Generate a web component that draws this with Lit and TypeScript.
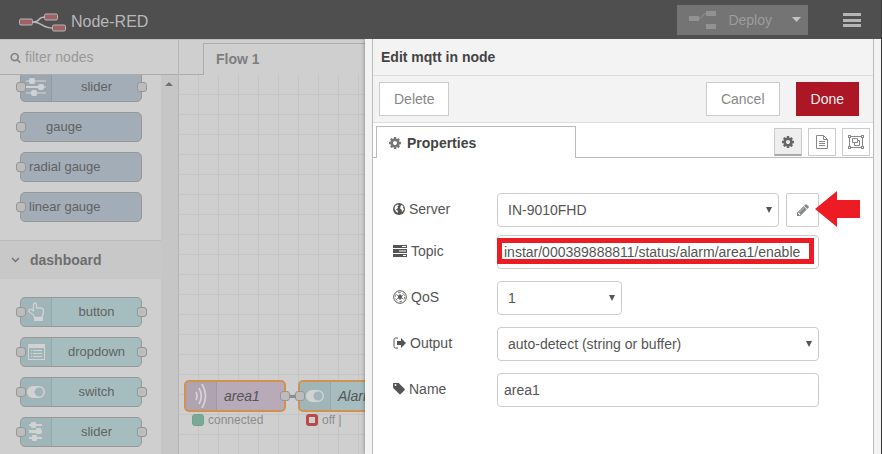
import { LitElement, html, svg, css, nothing, type TemplateResult } from "lit";
import { customElement, property } from "lit/decorators.js";

const COG =
  "M1152 896q0-106-75-181t-181-75-181 75-75 181 75 181 181 75 181-75 75-181zm512-109v222q0 12-8 23t-20 13l-185 28q-19 54-39 91 35 50 107 138 10 12 10 25t-9 23q-27 37-99 108t-94 71q-12 0-26-9l-138-108q-44 23-91 38-16 136-29 186-7 28-36 28h-222q-14 0-24.5-8.5t-11.5-21.5l-28-184q-49-16-90-37l-141 107q-10 9-25 9-14 0-25-11-126-114-165-168-7-10-7-23 0-12 8-23 15-21 51-66.5t54-70.5q-27-50-41-99l-183-27q-13-2-21-12.5t-8-23.5v-222q0-12 8-23t19-13l186-28q14-46 39-92-40-57-107-138-10-12-10-24 0-10 9-23 26-36 98.5-107.5t94.5-71.5q13 0 26 10l138 107q44-23 91-38 16-136 29-186 7-28 36-28h222q14 0 24.5 8.5t11.5 21.5l28 184q49 16 90 37l142-107q9-9 24-9 13 0 25 10 129 119 165 170 7 8 7 22 0 12-8 23-15 21-51 66.5t-54 70.5q26 50 41 98l183 28q13 2 21 12.5t8 23.5z";
const SEARCH =
  "M1216 832q0-185-131.5-316.5t-316.5-131.5-316.5 131.5-131.5 316.5 131.5 316.5 316.5 131.5 316.5-131.5 131.5-316.5zm512 832q0 52-38 90t-90 38q-54 0-90-38l-343-342q-179 124-399 124-143 0-273.5-55.5t-225-150-150-225-55.5-273.5 55.5-273.5 150-225 225-150 273.5-55.5 273.5 55.5 225 150 150 225 55.5 273.5q0 220-124 399l343 343q37 37 37 90z";
const PENCIL =
  "M491 1536l91-91-235-235-91 91v107h128v128h107zm523-928q0-22-22-22-10 0-17 7l-542 542q-7 7-7 17 0 22 22 22 10 0 17-7l542-542q7-7 7-17zm-54-192l416 416-832 832h-416v-416zm683 96q0 53-37 90l-166 166-416-416 166-165q36-38 90-38 53 0 91 38l235 234q37 39 37 91z";
const TAG =
  "M576 448q0-53-37.5-90.5t-90.5-37.5-90.5 37.5-37.5 90.5 37.5 90.5 90.5 37.5 90.5-37.5 37.5-90.5zm1067 576q0 53-37 90l-491 492q-39 37-91 37-53 0-90-37l-715-716q-38-37-64.5-101t-26.5-117v-416q0-52 38-90t90-38h416q53 0 117 26.5t102 64.5l715 714q37 39 37 91z";

const icon = (w: number, h: number, body: TemplateResult, box = `0 0 ${w} ${h}`) =>
  html`<svg width=${w} height=${h} viewBox=${box} fill="currentColor" aria-hidden="true">${body}</svg>`;
const glyph = (size: number, d: string, box = "0 0 1792 1792") =>
  icon(size, size, svg`<path d=${d} />`, box);

const icons: Record<string, TemplateResult> = {
  sliders: icon(20, 20, svg`
    <path d="M0 3h20v2H0zM0 9h20v2H0zM0 15h20v2H0z" opacity=".55" />
    <path d="M0 9h12v2H0z" />
    <rect x="3" y="1" width="6" height="6" rx="2" /><rect x="12" y="7" width="6" height="6" rx="2" />
    <rect x="5" y="13" width="6" height="6" rx="2" />`),
  hslider: icon(16, 20, svg`
    <path d="M1 2h13v2H1zM1 8h13v3H1zM1 15h13v2H1z" />
    <rect x="3" y="0" width="5" height="6" rx="1" /><rect x="8" y="6" width="5" height="6" rx="1" />
    <rect x="4" y="13" width="5" height="6" rx="1" />`),
  hand: icon(17, 20, svg`
    <path d="M5.500 9V2.500q0-1.500 1.500-1.500t1.500 1.500V6h4.500q2.500 0 2.500 3 0 4-2 6.500H7Q5.500 12 2 10.500 0 9 1.500 7.500 3 6.500 5.500 9z"
      fill="none" stroke="currentColor" stroke-width="1.300" stroke-linejoin="round" />
    <path d="M6 15h9v4H6z" />`),
  list: icon(17, 18, svg`
    <path fill-rule="evenodd" d="M0 1h17v16H0zM1 5v11h15V5z" />
    <path d="M3 7h1v1H3zM5 7h9v1H5zM3 10h1v1H3zM5 10h9v1H5zM3 13h1v1H3zM5 13h9v1H5z" />`),
  toggle: icon(18, 14, svg`
    <path fill-rule="evenodd" d="M6 1h6a6 6 0 0 1 0 12H6A6 6 0 0 1 6 1zm6 1.500a4.500 4.500 0 1 0 0 9 4.500 4.500 0 0 0 0-9z" />`),
  waves: icon(12, 24, svg`
    <g fill="none" stroke="currentColor" stroke-width="1.800">
      <path d="M1 8q2 4 0 8M4 4q4.500 8 0 16M7 0q7 12 0 24" /></g>`),
  globe: icon(12, 12, svg`
    <circle cx="6" cy="6" r="6" />
    <path fill="#fff" d="M2 3l2.500-1.500L6 2 4.500 3.500 5 5 3 6.500 5 8l-.5 2L3 8.500 1.500 6zM8 2l2.500 1-.5 1.500 1 2-2 2.500-.5-2.500L7 5.500z" />`),
  tasks: icon(14, 12, svg`
    <path fill-rule="evenodd" d="M0 0h14v3H0zM9 1v1h4V1zM0 4h14v4H0zM6 5.500v1h7v-1zM0 9h14v3H0zM10 10v1h3v-1z" />`),
  empire: icon(14, 14, svg`
    <circle cx="7" cy="7" r="6.300" fill="none" stroke="currentColor" />
    <circle cx="7" cy="7" r="4.600" fill="none" stroke="currentColor" stroke-width=".8" stroke-dasharray="2.800 2" />
    <path stroke="currentColor" d="M7 4v6M4.300 5.500l5.400 3M4.300 8.500l5.400-3" /><circle cx="7" cy="7" r="2" />`),
  signout: icon(13, 12, svg`
    <path d="M5 1H2.500Q1 1 1 2.500v7Q1 11 2.500 11H5" fill="none" stroke="currentColor" />
    <path d="M4 4h4V1l5 5-5 5V8H4z" />`),
  tag: glyph(12, TAG, "128 192 1536 1536"),
  cog: glyph(14, COG),
  search: glyph(11, SEARCH),
  pencil: glyph(14, PENCIL),
  doc: icon(12, 14, svg`
    <path d="M.5.5h7l4 4v9H.5zM7.500.5v4h4M3 6.500h6M3 8.500h6M3 10.500h6" fill="none" stroke="currentColor" />`),
  group: icon(16, 14, svg`
    <path d="M1.500 1.500h13v11h-13zM4.500 3.500h5v4h-5zM9.500 5.500h2v5h-5v-3" fill="none" stroke="currentColor" />
    <path d="M0 0h3v3H0zM13 0h3v3h-3zM0 11h3v3H0zM13 11h3v3h-3z" />
    <path fill="#fff" d="M1 1h1v1H1zM14 1h1v1h-1zM1 12h1v1H1zM14 12h1v1h-1z" />`),
  chevron: icon(9, 6, svg`<path d="M1 1l3.500 3.500L8 1" fill="none" stroke="currentColor" stroke-width="1.300" />`),
  down: icon(6, 6, svg`<path d="M0 0h6L3 6z" />`),
  caret: icon(9, 5, svg`<path d="M0 0h9L4.500 5z" />`),
  up: icon(8, 4, svg`<path d="M0 4h8L4 0z" />`),
  bars: icon(18, 14, svg`<path d="M0 0h18v3H0zM0 6h18v3H0zM0 11h18v3H0z" />`),
  deploy: icon(28, 18, svg`
    <path d="M0 5h10v5H0zM17 0h10v5H17zM17 13h10v5H17z" />
    <path d="M10 7.500q2 0 3.500-2.500T17 2.500" fill="none" stroke="currentColor" />`),
};

/** A flow node: body, optional icon strip and its ports. */
@customElement("flow-node")
export class FlowNode extends LitElement {
  @property() label = "";
  @property() icon = "";
  @property() ports = "both";

  static styles = css`
    :host {
      display: flex;
      position: relative;
      box-sizing: border-box;
      height: 30px;
      border: 1px solid #989898;
      border-radius: 5px;
      background: var(--node, #a2adb7);
      color: #626262;
      font-size: 13px;
    }
    .strip {
      display: flex;
      align-items: center;
      justify-content: center;
      flex: 0 0 30px;
      border-right: 1px solid rgba(0, 0, 0, 0.07);
      border-radius: 4px 0 0 4px;
      background: rgba(0, 0, 0, 0.04);
      color: #d2d2d2;
    }
    .label {
      flex: 1;
      align-self: center;
      text-align: var(--align, center);
      padding: 0 var(--pad, 0);
      white-space: nowrap;
    }
    .port {
      position: absolute;
      top: calc(50% - 5px);
      box-sizing: border-box;
      width: 10px;
      height: 10px;
      border: 1px solid #969696;
      border-radius: 3px;
      background: #bcbcbc;
    }
    .in { left: -5px; }
    .out { right: -6px; }
  `;

  render() {
    return html`
      ${this.icon ? html`<span class="strip">${icons[this.icon]}</span>` : nothing}
      <span class="label">${this.label}</span>
      ${this.ports !== "out" ? html`<span class="port in"></span>` : nothing}
      ${this.ports !== "in" ? html`<span class="port out"></span>` : nothing}
    `;
  }
}

@customElement("app-root")
export class AppRoot extends LitElement {
  static styles = css`
    :host {
      display: flex;
      flex-direction: column;
      box-sizing: border-box;
      height: 100vh;
      overflow: hidden;
      border-right: 1px solid #3a3a3a;
      background: #cfcfcf;
      font: 14px/20px "Liberation Sans", Arial, sans-serif;
      color: #555;
    }
    * { box-sizing: border-box; }
    svg { display: block; flex: none; }
    button, input, select { font: inherit; color: inherit; margin: 0; }
    button { display: flex; align-items: center; justify-content: center; padding: 0; }

    header {
      display: flex;
      align-items: center;
      flex: 0 0 39px;
      padding: 0 20px 0 19px;
      background: #4f4f4f;
    }
    .brand { display: flex; align-items: center; gap: 5px; flex: 1; font-size: 16px; color: #b8b8b8; padding-top: 5px; }
    .deploy { display: flex; height: 30px; margin-right: 35px; background: #747474; }
    .deploy button { border: 0; background: none; color: #929292; }
    .deploy-main { gap: 11px; padding: 0 12px; }
    .deploy .deploy-menu { width: 24px; color: #c2c2c2; }
    .deploy span { color: #9c9c9c; }
    .menu { border: 0; background: none; color: #b5b5b5; }
    .menu, .deploy { flex: none; }

    main { display: flex; flex: 1; min-height: 0; border-top: 1px solid #bdbdbd; }
    .palette { display: flex; flex-direction: column; flex: 0 0 179px; min-width: 0; border-right: 1px solid #b4b4b4; }
    .search { display: flex; align-items: center; gap: 4px; flex: 0 0 35px; padding-left: 10px; border-bottom: 1px solid #acacac; color: #848484; }
    .search input { flex: 1; min-width: 0; border: 0; padding: 0; background: none; outline: 0; }
    .search input::placeholder { color: #999; opacity: 1; }
    .scroller { display: flex; flex: 1; min-height: 0; overflow: hidden; }
    .nodes { flex: 1; min-width: 0; }
    .bar { flex: 0 0 17px; padding: 7px 4px; background: #c6c6c6; color: #707070; }
    .group { display: flex; flex-direction: column; gap: 10px; padding: 18px 19px 18px 20px; }
    .scrolled { margin-top: -21px; }
    .teal { --node: #a6bdbf; }
    .mauve { --node: #b8aab8; }
    .plain { --align: left; --pad: 8px; }
    .indent { --align: left; --pad: 25px; }
    .category {
      display: flex; align-items: center; gap: 10px; height: 39px; margin: 0; padding-left: 11px;
      border-top: 1px solid #bbb; background: #c8c8c8; font-size: 14px; color: #6e6e6e;
    }

    .workspace { display: flex; flex-direction: column; flex: 1; min-width: 0; overflow: hidden; }
    .tabs { display: flex; flex: 0 0 35px; }
    .tabs::before { content: ""; flex: 0 0 24px; border-bottom: 1px solid #acacac; }
    .tab { flex: 1; margin-top: 3px; padding: 5px 12px; border: solid #acacac; border-width: 1px 0 0 1px; font-weight: bold; color: #7e7e7e; }
    .canvas {
      position: relative; flex: 1; overflow: hidden;
      background: linear-gradient(90deg, transparent 19px, #c5c5c5 19px) 0 0 / 20px 20px,
        linear-gradient(transparent 19px, #c5c5c5 19px) 0 0 / 20px 20px;
    }
    .canvas flow-node {
      position: absolute; top: 305px; height: 32px; border: 2px solid #d3914f;
      font-size: 14px; font-style: italic; color: #555; --align: left; --pad: 7px;
    }
    .first { left: 5px; width: 102px; }
    .second { left: 119px; width: 122px; }
    .wire { position: absolute; left: 111px; top: 320px; width: 6px; height: 3px; background: #8d8d8d; }
    .status { position: absolute; top: 335px; display: flex; align-items: center; gap: 4px; font-size: 12px; color: #8c8c8c; white-space: nowrap; }
    .dot { width: 12px; height: 12px; border: 1px solid #6fa38e; border-radius: 3px; background: #7aa896; }
    .dot.off { border: 3px solid #b94a4a; background: #cfcfcf; }
    .s1 { left: 13px; }
    .s2 { left: 127px; }

    .tray {
      position: relative; display: flex; flex: 0 1 516px; margin-top: -1px; padding: 0 7px;
      background: #f3f3f3; box-shadow: 0 0 4px rgba(0, 0, 0, 0.4);
      clip-path: inset(0 0 0 -6px);
    }
    .sheet { display: flex; flex-direction: column; flex: 1; min-width: 0; border: solid #bbb; border-width: 0 1px; background: #fff; }
    .title { flex: 0 0 37px; margin: 0; padding: 8px; font-size: 14px; color: #444; background: #f3f3f3; border-bottom: 1px solid #ddd; }
    .actions { display: flex; align-items: center; flex: 0 0 47px; padding: 0 14px 0 6px; border-bottom: 1px solid #ddd; background: #f3f3f3; }
    .actions button { height: 34px; padding: 0 14px; border: 1px solid #ccc; background: #fff; color: #888; }
    .actions .cancel { margin-left: auto; margin-right: 16px; }
    .actions .done { border-color: #ad1625; background: #ad1625; color: #eee; }
    .proptabs { display: flex; align-items: flex-end; flex: 0 0 35px; padding-left: 3px; background: linear-gradient(#bbb, #bbb) 0 100% / 100% 1px no-repeat; }
    .proptab { display: flex; align-items: center; gap: 5px; width: 200px; height: 32px; padding-left: 11px; border: 1px solid #bbb; border-bottom: 0; background: #fff; font-weight: bold; color: #444; }
    .proptab svg { color: #777; }
    .tools { display: flex; gap: 6px; margin-left: auto; padding: 0 3px 2px 0; }
    .tools button { width: 28px; height: 28px; border: 1px solid #ccc; background: #fff; color: #888; }
    .tools .on { border-bottom: 2px solid #aaa; background: #eee; color: #666; }

    form { display: flex; flex-direction: column; gap: 12px; padding: 35px 54px 20px 20px; }
    .row { display: flex; align-items: center; position: relative; }
    .row:first-child { margin-bottom: -4px; }
    .row > label { display: flex; align-items: center; gap: 4px; flex: 0 0 104px; padding-bottom: 2px; }
    .field { position: relative; display: flex; flex: 1; min-width: 0; }
    .small { flex: 0 0 125px; }
    .field input, .field select { appearance: none; width: 100%; height: 34px; padding: 0 6px; border: 1px solid #ccc; border-radius: 4px; background: #fff; outline: 0; }
    .field select { padding: 0 10px; }
    .field svg { position: absolute; right: 7px; top: 14px; pointer-events: none; }
    .edit { flex: 0 0 33px; height: 34px; margin-left: 7px; border: 1px solid #ccc; border-radius: 2px; background: #fff; color: #888; }
    .arrow { position: absolute; left: calc(100% - 4px); top: -2px; color: #ed1c24; }
    .mark { position: absolute; inset: 3px 5px 5px 0; border: 5px solid #ed1c24; pointer-events: none; }
  `;

  private select(id: string, value: string, small = false) {
    return html`<span class="field ${small ? "small" : ""}">
      <select id=${id}><option>${value}</option></select>${icons.down}
    </span>`;
  }

  private label(id: string, name: string, text: string) {
    return html`<label for=${id}>${icons[name]}<span>${text}</span></label>`;
  }

  render() {
    return html`
      <header>
        <div class="brand">
          ${icon(47, 19, svg`
            <g fill="none" stroke="#b8b8b8" stroke-width="1.500">
              <path d="M14 9C22 9 18 4 26 4M14 9C24 9 22 15 34 15" /></g>
            <g fill="#9c6266" stroke="#b8b8b8">
              <rect x=".5" y="6" width="13" height="6" rx="1.500" />
              <rect x="25.500" y="1" width="13" height="6" rx="1.500" />
              <rect x="33.500" y="12" width="13" height="6" rx="1.500" /></g>`)}
          <span>Node-RED</span>
        </div>
        <div class="deploy">
          <button class="deploy-main">${icons.deploy}<span>Deploy</span></button>
          <button class="deploy-menu" aria-label="Deploy options">${icons.caret}</button>
        </div>
        <button class="menu" aria-label="Menu">${icons.bars}</button>
      </header>
      <main>
        <section class="palette">
          <div class="search">${icons.search}<input aria-label="filter nodes" placeholder="filter nodes" /></div>
          <div class="scroller">
            <div class="nodes">
              <div class="group scrolled">
                <flow-node icon="sliders" label="slider"></flow-node>
                <flow-node class="indent" label="gauge" ports="in"></flow-node>
                <flow-node class="plain" label="radial gauge" ports="in"></flow-node>
                <flow-node class="plain" label="linear gauge" ports="in"></flow-node>
              </div>
              <h2 class="category">${icons.chevron}dashboard</h2>
              <div class="group teal">
                <flow-node icon="hand" label="button"></flow-node>
                <flow-node icon="list" label="dropdown"></flow-node>
                <flow-node icon="toggle" label="switch"></flow-node>
                <flow-node icon="hslider" label="slider"></flow-node>
              </div>
            </div>
            <div class="bar">${icons.up}</div>
          </div>
        </section>
        <section class="workspace">
          <div class="tabs"><div class="tab">Flow 1</div></div>
          <div class="canvas">
            <flow-node class="first mauve" icon="waves" label="area1" ports="out"></flow-node>
            <flow-node class="second teal" icon="toggle" label="Alarm"></flow-node>
            <span class="wire"></span>
            <span class="status s1"><i class="dot"></i>connected</span>
            <span class="status s2"><i class="dot off"></i>off |</span>
          </div>
        </section>
        <section class="tray">
          <div class="sheet">
            <h1 class="title">Edit mqtt in node</h1>
            <div class="actions">
              <button>Delete</button>
              <button class="cancel">Cancel</button>
              <button class="done">Done</button>
            </div>
            <div class="proptabs">
              <div class="proptab">${icons.cog}Properties</div>
              <div class="tools">
                <button class="on" aria-label="Properties">${icons.cog}</button>
                <button aria-label="Description">${icons.doc}</button>
                <button aria-label="Appearance">${icons.group}</button>
              </div>
            </div>
            <form>
              <div class="row">
                ${this.label("server", "globe", "Server")}
                ${this.select("server", "IN-9010FHD")}
                <button class="edit" type="button" aria-label="Edit server">${icons.pencil}</button>
                <span class="arrow">${icon(45, 36, svg`<path d="M0 18L22 0v9h23v18H22v9z" />`)}</span>
              </div>
              <div class="row">
                ${this.label("topic", "tasks", "Topic")}
                <span class="field">
                  <input id="topic" .value=${"instar/000389888811/status/alarm/area1/enable"} />
                  <span class="mark"></span>
                </span>
              </div>
              <div class="row">${this.label("qos", "empire", "QoS")}${this.select("qos", "1", true)}</div>
              <div class="row">
                ${this.label("output", "signout", "Output")}
                ${this.select("output", "auto-detect (string or buffer)")}
              </div>
              <div class="row">
                ${this.label("name", "tag", "Name")}
                <span class="field"><input id="name" .value=${"area1"} /></span>
              </div>
            </form>
          </div>
        </section>
      </main>
    `;
  }
}
